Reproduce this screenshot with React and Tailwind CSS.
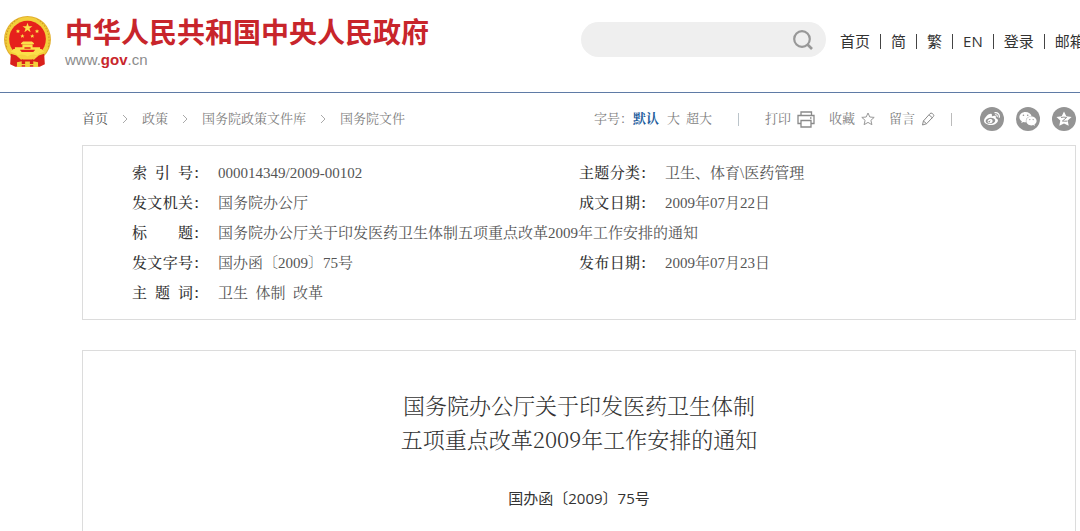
import { FaWeibo, FaWeixin } from "react-icons/fa";

const SERIF =
  "font-['SimSun','Liberation_Serif','Noto_Serif_CJK_SC','Noto_Sans_CJK_SC',serif]";

function Emblem() {
  return (
    <svg viewBox="0 0 138 150" className="h-[51px] w-[47px] shrink-0" aria-hidden="true">
      <circle cx="69" cy="69" r="69" fill="#e3b02f" />
      <circle cx="69" cy="69" r="66" fill="#f2cf3b" />
      <path d="M8 92C0 60 12 26 40 10M130 92c8-32-4-66-32-82" fill="none" stroke="#cf9a25" strokeWidth="3" strokeDasharray="5 4" />
      <circle cx="69" cy="68" r="54" fill="#e6211c" />
      <path d="M69 20l3.600 10.500h11l-8.800 6.600 3.300 10.700-9.100-6.400-9.100 6.400 3.300-10.700-8.800-6.600h11z" fill="#fbe04a" />
      <g fill="#fbe04a">
        <path d="M41 39l2 4h4l-3 3 1 4-4-2-4 2 1-4-3-3h4zM97 39l2 4h4l-3 3 1 4-4-2-4 2 1-4-3-3h4zM54 53l2 4h4l-3 3 1 4-4-2-4 2 1-4-3-3h4zM83 53l2 4h4l-3 3 1 4-4-2-4 2 1-4-3-3h4z" />
        <path d="M50 80l6-5h26l6 5v3H50zM54 84h30v8h22v9H32v-9h22z" />
        <path d="M28 97h16l8 9h34l8-9h16l8 8-14 5-12 11H46l-12-11-14-5z" />
      </g>
      <path d="M47 99h44l-5 5H52zM60 92h18v4H60z" fill="#e6211c" />
      <path d="M20 111l16 5 14 13 19-7 19 7 14-13 16-5 2 31-15 7H33l-15-7z" fill="#d9201b" />
      <path d="M40 118c10-7 18-5 29 1 11-6 19-8 29-1-8-1-12 4-16 10H56c-4-6-8-11-16-10z" fill="#f6d23e" />
      <path d="M38 136l14-3v8h10v-7h14v7h10v-8l14 3v14H86v-5H76v6H62v-6H52v5H38z" fill="#f2cf3b" />
    </svg>
  );
}

function PrinterIcon() {
  return (
    <svg viewBox="0 0 18 17" className="h-[17px] w-[18px]" fill="none" stroke="#8a8a8a" strokeWidth="1.300" aria-hidden="true">
      <path d="M4 4.500V1h10.500v3.500M4 12.500H1v-8h16v8h-3" />
      <path d="M4 9.500h10V16H4zM13 7h1.500" />
    </svg>
  );
}

function StarIcon() {
  return (
    <svg viewBox="0 0 14 14" className="h-[14px] w-[14px]" fill="none" stroke="#999" strokeLinejoin="round" aria-hidden="true">
      <path d="M7 1l1.800 4 4.400.4-3.300 2.900 1 4.400L7 10.400l-3.900 2.300 1-4.400L.8 5.400 5.200 5z" />
    </svg>
  );
}

function PencilIcon() {
  return (
    <svg viewBox="0 0 14 14" className="h-[14px] w-[14px]" fill="none" stroke="#8a8a8a" strokeLinejoin="round" aria-hidden="true">
      <path d="M1.500 13l.9-4L9 1.600Q10 .6 11.300 1.500l1 .9Q13.300 3.500 12.400 4.500L5.600 11.700zM8 2.800l3.400 3M2.400 9l3.200 2.700" />
    </svg>
  );
}

function QzoneIcon() {
  return (
    <svg viewBox="0 0 16 16" className="h-4 w-4" aria-hidden="true">
      <path d="M8 .4l2.300 4.800 5.300.7-3.900 3.600 1 5.300L8 12.400l-4.700 2.400 1-5.300L.4 5.900l5.300-.7z" fill="#fff" />
      <path d="M5 6.500q3-.8 5.700 0L6.400 10q2.400.4 5 .1" fill="none" stroke="#949494" strokeWidth="1" />
    </svg>
  );
}

const navLinks = ["首页", "简", "繁", "EN", "登录", "邮箱"];
const crumbs = ["首页", "政策", "国务院政策文件库", "国务院文件"];
const rows = [
  ["索引号", "000014349/2009-00102", "主题分类", "卫生、体育\\医药管理"],
  ["发文机关", "国务院办公厅", "成文日期", "2009年07月22日"],
  ["标题", "国务院办公厅关于印发医药卫生体制五项重点改革2009年工作安排的通知"],
  ["发文字号", "国办函〔2009〕75号", "发布日期", "2009年07月23日"],
  ["主题词", "卫生\u00a0 体制\u00a0 改革"],
];

function Label({ text }) {
  return (
    <th scope="row" className="p-0 text-left font-medium text-[#333]">
      <span className="flex">
        <span className="flex w-[61px] justify-between">
          {[...text].map((c, i) => (
            <span key={i}>{c}</span>
          ))}
        </span>
        ：
      </span>
    </th>
  );
}

function Share({ label, children }) {
  return (
    <a href="#" aria-label={label} className="flex size-6 items-center justify-center rounded-full bg-[#949494] text-white">
      {children}
    </a>
  );
}

export default function App() {
  return (
    <div className="flex min-h-screen flex-col overflow-hidden bg-white whitespace-nowrap">
      <header className="flex h-[93px] shrink-0 items-start border-b border-[#5f7ba6] pl-1">
        <a href="#" className="flex pt-4">
          <Emblem />
          <span className="flex flex-col pl-[14px] font-['Liberation_Sans','Noto_Sans_CJK_SC',sans-serif]">
            <span className="text-[28px] leading-[36px] font-bold text-[#c8252b]">中华人民共和国中央人民政府</span>
            <span className="text-[15px] leading-4 text-[#8c8c8c]">
              www.<span className="font-bold text-[#c8252b]">gov</span>.cn
            </span>
          </span>
        </a>
        <form className="mt-[22px] ml-auto flex h-[35px] w-[245px] items-center rounded-full bg-[#efefef] pr-3">
          <input type="search" aria-label="搜索" className="min-w-0 flex-1 bg-transparent pl-4 text-[15px] outline-none" />
          <button type="button" aria-label="搜索">
            <svg viewBox="0 0 22 22" className="size-[22px]" fill="none" stroke="#989898" strokeWidth="2.200" aria-hidden="true">
              <circle cx="10" cy="10" r="7.800" />
              <path d="M15.500 15.500l4.500 4.500" strokeWidth="2.600" />
            </svg>
          </button>
        </form>
        <nav className="mt-[30px] ml-[14px] flex w-60 shrink-0 items-center gap-[10px] overflow-hidden font-['Open_Sans','Noto_Sans_CJK_SC',sans-serif] text-[15px] leading-[22px] text-[#333]">
          {navLinks.map((t, i) => (
            <span key={t} className="flex shrink-0 items-center gap-[10px]">
              {i > 0 && <span className="h-[15px] w-px bg-[#444]" />}
              <a href="#">{t}</a>
            </span>
          ))}
        </nav>
      </header>

      <main className={`flex flex-1 flex-col pr-1 pl-[82px] ${SERIF}`}>
        <div className="flex h-[52px] items-center justify-between text-[13px] leading-5 text-[#808080]">
          <nav className="flex items-center gap-[14px]">
            {crumbs.map((t, i) => (
              <span key={t} className="flex items-center gap-[14px]">
                {i > 0 && (
                  <svg viewBox="0 0 6 10" className="h-[10px] w-[6px]" fill="none" stroke="#aaa" aria-hidden="true">
                    <path d="M1 1l4 4-4 4" />
                  </svg>
                )}
                <a href="#" className={i === 0 ? "text-[#555]" : ""}>{t}</a>
              </span>
            ))}
          </nav>
          <div className="flex items-center">
            <span>字号：</span>
            <button type="button" className="font-bold text-[#1c5c9c]">默认</button>
            <button type="button" className="ml-2">大</button>
            <button type="button" className="ml-1.5">超大</button>
            <span className="mx-[26px] h-[13px] w-px bg-[#bbc4ca]" />
            <button type="button" className="flex items-center gap-[6px]">打印<PrinterIcon /></button>
            <button type="button" className="ml-[14px] flex items-center gap-[6px]">收藏<StarIcon /></button>
            <button type="button" className="ml-[14px] flex items-center gap-[6px]">留言<PencilIcon /></button>
            <span className="mr-[28px] ml-4 h-[13px] w-px bg-[#bbb]" />
            <div className="flex gap-3">
              <Share label="微博"><FaWeibo className="size-4" /></Share>
              <Share label="微信"><FaWeixin className="size-[18px]" /></Share>
              <Share label="QQ空间"><QzoneIcon /></Share>
            </div>
          </div>
        </div>

        <section className="border border-[#dcdcdc] pt-3 pr-5 pb-[11px] pl-[49px]">
          <table className="w-full table-fixed border-collapse text-left text-[15px] leading-[30px] text-[#555]">
            <colgroup>
              <col className="w-[86px]" />
              <col className="w-[361px]" />
              <col className="w-[86px]" />
              <col />
            </colgroup>
            <tbody>
              {rows.map(([a, b, c, d]) => (
                <tr key={a}>
                  <Label text={a} />
                  <td className="p-0" colSpan={c ? 1 : 3}>{b}</td>
                  {c && <Label text={c} />}
                  {c && <td className="p-0">{d}</td>}
                </tr>
              ))}
            </tbody>
          </table>
        </section>

        <article className="mt-[30px] flex-1 border border-b-0 border-[#dcdcdc] pt-[37px] text-center text-[#333]">
          <h1 className="font-['Noto_Serif_CJK_SC','Noto_Sans_CJK_SC',serif] text-[22px] leading-[34px] font-light">
            国务院办公厅关于印发医药卫生体制
            <br />
            五项重点改革2009年工作安排的通知
          </h1>
          <p className="mt-[30px] font-['Open_Sans','Noto_Sans_CJK_SC',sans-serif] text-[15px] leading-[24px]">
            国办函〔2009〕75号
          </p>
        </article>
      </main>
    </div>
  );
}
